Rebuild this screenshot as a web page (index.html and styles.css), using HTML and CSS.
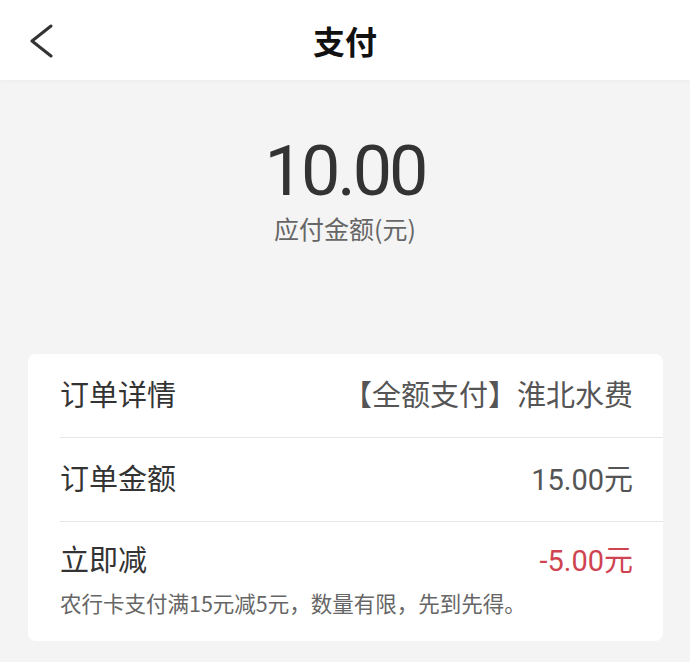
FILE: index.html
```html
<!DOCTYPE html>
<html lang="zh-CN">
  <head>
    <meta charset="UTF-8" />
    <meta name="viewport" content="width=device-width, initial-scale=1.0" />
    <title>支付</title>
    <link rel="stylesheet" href="styles.css">
  </head>
  <body>
    <header class="topbar">
      <a href="#" class="back-button" aria-label="返回">
        <svg width="26" height="34" viewBox="0 0 26 34">
          <path d="M23 2 L4 17 L23 32" fill="none" stroke="#333" stroke-width="3" stroke-linecap="round" stroke-linejoin="round" />
        </svg>
      </a>
      <h1>支付</h1>
      <span></span>
    </header>

    <section class="amount">
      <div class="amount-value">10.00</div>
      <div class="amount-label">应付金额(元)</div>
    </section>

    <div class="card">
      <div class="row">
        <span class="row-title">订单详情</span>
        <span class="row-value">【全额支付】淮北水费</span>
      </div>
      <div class="row">
        <span class="row-title">订单金额</span>
        <span class="row-value"><span class="num">15.00</span>元</span>
      </div>
      <div class="row row-discount">
        <div class="row-main">
          <span class="row-title">立即减</span>
          <span class="row-value red"><span class="num">-5.00</span>元</span>
        </div>
        <p class="row-note">农行卡支付满15元减5元，数量有限，先到先得。</p>
      </div>
    </div>
  </body>
</html>
```

FILE: styles.css
```css
body {
  font-family: "Noto Sans CJK SC", "Noto Sans", sans-serif;
  margin: 0;
  background-color: #f4f4f4;
  color: #333;
}

.topbar {
  display: grid;
  grid-template-columns: 1fr auto 1fr;
  align-items: center;
  height: 80px;
  background: #fff;
  box-shadow: 0 1px 4px rgba(0, 0, 0, 0.04);
}

.back-button {
  display: flex;
  padding-left: 28px;
  padding-top: 2px;
}

.topbar h1 {
  margin: 0;
  font-size: 32px;
  font-weight: 700;
  color: #111;
}

.amount {
  text-align: center;
  padding-top: 56px;
}

.amount-value {
  font-family: Roboto, "Noto Sans", sans-serif;
  font-size: 70px;
  line-height: 70px;
  letter-spacing: -3px;
  color: #333;
}

.amount-label {
  margin-top: 6px;
  font-size: 25px;
  line-height: 32px;
  color: #666;
}

.card {
  margin: 110px 27px 0 28px;
  background: #fff;
  border-radius: 8px;
  padding-left: 32px;
}

.row {
  display: flex;
  justify-content: space-between;
  align-items: center;
  height: 78px;
  padding: 0 30px 5px 0;
  border-bottom: 1.5px solid #e6e6e6;
}

.row-title {
  font-size: 29px;
  color: #333;
}

.row-value {
  font-size: 29px;
  color: #555;
}

.num {
  font-family: Roboto, "Noto Sans", sans-serif;
}

.red {
  color: #cf4450;
}

.row-discount {
  display: block;
  height: auto;
  border-bottom: none;
  padding: 15px 30px 23px 0;
}

.row-main {
  display: flex;
  justify-content: space-between;
  align-items: center;
}

.row-note {
  margin: 8px 0 0;
  font-size: 21.5px;
  color: #666;
}
```
